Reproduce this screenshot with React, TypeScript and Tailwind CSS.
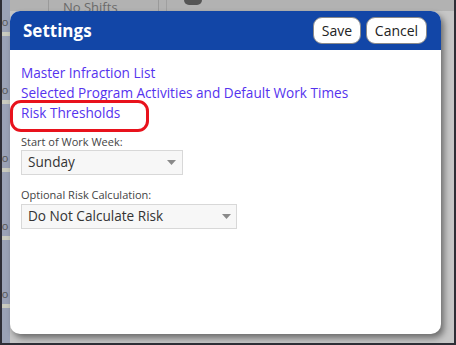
import React from "react";

const font = { fontFamily: '"Open Sans", "Noto Sans", sans-serif' };

function Caret() {
  return (
    <svg width="9" height="5" viewBox="0 0 9 5" className="shrink-0">
      <path d="M0 0 L9 0 L4.5 5 Z" fill="#8a8a8a" />
    </svg>
  );
}

export default function App() {
  const stripItems = [0, 1, 2, 3, 4];
  return (
    <div
      className="w-[456px] h-[345px] relative overflow-hidden flex border-l-2 border-r-2 border-b-2 border-[#2e2e36] bg-[#c6c6c6]"
      style={font}
    >
      {/* background app */}
      <div className="w-[8px] shrink-0 bg-[#9aa2b6] flex flex-col overflow-hidden">
        {stripItems.map((i) => (
          <div key={i} className="h-[68px] shrink-0 flex flex-col">
            <div className="h-[16px]" />
            <div className="text-[11px] leading-[12px] text-[#555] -ml-[3px]">io</div>
            <div className="h-[4px]" />
            <div className="h-[4px] bg-[#c9cbbf]" />
          </div>
        ))}
      </div>
      <div className="flex-1 flex flex-col">
        <div className="h-[11px] bg-[#b2b2b2] flex items-end text-[13px] leading-[14px] text-[#6a6a6a] overflow-hidden">
          <div className="w-[1px] h-full bg-[#9a9a9a] ml-[38px]" />
          <div className="ml-[14px] -mb-[3px]">No Shifts</div>
          <div className="w-[1px] h-full bg-[#9a9a9a] ml-[40px]" />
          <div className="w-[1px] h-full bg-[#a0a0a0] ml-[7px]" />
          <div className="w-[18px] h-[5px] rounded-b-full bg-[#555] ml-[17px] self-start" />
        </div>
        <div className="flex-1 bg-[#c6c6c6]" />
      </div>

      {/* modal */}
      <div className="absolute left-[8px] top-[11px] w-[431px] h-[323px] bg-white rounded-[10px] shadow-[3px_4px_6px_rgba(0,0,0,0.45)] flex flex-col">
        <div className="h-[39px] bg-[#1246a7] rounded-t-[10px] flex items-center justify-between pl-[13px] pr-[14px]">
          <div className="text-white font-bold text-[17px] leading-[20px]">Settings</div>
          <div className="flex gap-[5px]">
            <button className="w-[48px] h-[27px] bg-white rounded-[9px] border border-[#8a8a8a] text-[14px] text-[#222]">
              Save
            </button>
            <button className="w-[61px] h-[27px] bg-white rounded-[9px] border border-[#8a8a8a] text-[14px] text-[#222]">
              Cancel
            </button>
          </div>
        </div>
        <div className="relative flex flex-col pl-[11px] pt-[13px]">
          <div className="flex flex-col text-[13.6px] leading-[20px] text-[#5533ee]">
            <span>Master Infraction List</span>
            <span>Selected Program Activities and Default Work Times</span>
            <span>Risk Thresholds</span>
          </div>
          <div className="mt-[11px] text-[11px] leading-[15px] text-[#444]">Start of Work Week:</div>
          <div className="mt-[1px] w-[162px] h-[25px] bg-[#f7f7f7] border border-[#d8d8d8] flex items-center justify-between pl-[6px] pr-[6px] text-[13.6px] text-[#333]">
            <span>Sunday</span>
            <Caret />
          </div>
          <div className="mt-[12px] text-[11px] leading-[15px] text-[#444]">Optional Risk Calculation:</div>
          <div className="mt-[2px] w-[216px] h-[25px] bg-[#f7f7f7] border border-[#d8d8d8] flex items-center justify-between pl-[6px] pr-[5px] text-[13.6px] text-[#333]">
            <span>Do Not Calculate Risk</span>
            <Caret />
          </div>
          <div className="absolute left-0 top-[50px] w-[139px] h-[32px] rounded-[11px] border-[3px] border-[#e8121c]" />
        </div>
      </div>
    </div>
  );
}
